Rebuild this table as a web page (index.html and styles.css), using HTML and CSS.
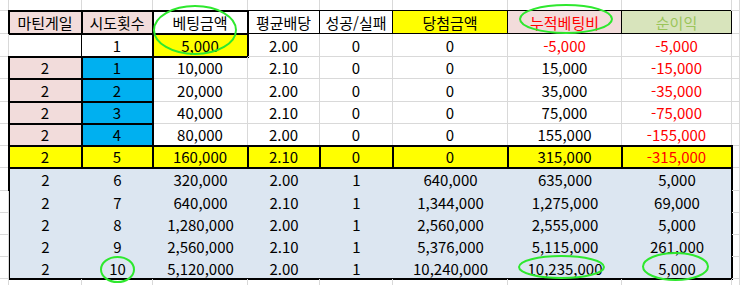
FILE: index.html
```html
<!DOCTYPE html>
<html lang="ko">
<head>
<meta charset="utf-8">
<title>마틴게일</title>
<link rel="stylesheet" href="styles.css">
</head>
<body>
<div class="sheet">
  <div class="grid">
    <!-- top partial row -->
    <div class="c"></div><div class="c"></div><div class="c"></div><div class="c"></div><div class="c"></div><div class="c"></div><div class="c"></div><div class="c"></div><div class="c"></div><div class="c"></div>
    <!-- header -->
    <div class="c"></div>
    <div class="c pink thick">마틴게일</div>
    <div class="c pink thick">시도횟수</div>
    <div class="c thick">베팅금액</div>
    <div class="c thin">평균배당</div>
    <div class="c thin">성공/실패</div>
    <div class="c yellow thin">당첨금액</div>
    <div class="c pink thin red">누적베팅비</div>
    <div class="c green thin gtext">순이익</div>
    <div class="c"></div>
    <!-- row 1 -->
    <div class="c"></div>
    <div class="c"></div>
    <div class="c darkleft">1</div>
    <div class="c yellow thick">5,000</div>
    <div class="c">2.00</div>
    <div class="c">0</div>
    <div class="c">0</div>
    <div class="c red">-5,000</div>
    <div class="c red">-5,000</div>
    <div class="c"></div>
    <!-- row 2 -->
    <div class="c"></div>
    <div class="c pink thick">2</div>
    <div class="c blue thick">1</div>
    <div class="c">10,000</div>
    <div class="c">2.10</div>
    <div class="c">0</div>
    <div class="c">0</div>
    <div class="c">15,000</div>
    <div class="c red">-15,000</div>
    <div class="c"></div>
    <!-- row 3 -->
    <div class="c"></div>
    <div class="c pink thick">2</div>
    <div class="c blue thick">2</div>
    <div class="c">20,000</div>
    <div class="c">2.00</div>
    <div class="c">0</div>
    <div class="c">0</div>
    <div class="c">35,000</div>
    <div class="c red">-35,000</div>
    <div class="c"></div>
    <!-- row 4 -->
    <div class="c"></div>
    <div class="c pink thick">2</div>
    <div class="c blue thick">3</div>
    <div class="c">40,000</div>
    <div class="c">2.10</div>
    <div class="c">0</div>
    <div class="c">0</div>
    <div class="c">75,000</div>
    <div class="c red">-75,000</div>
    <div class="c"></div>
    <!-- row 5 -->
    <div class="c"></div>
    <div class="c pink thick">2</div>
    <div class="c blue thick">4</div>
    <div class="c">80,000</div>
    <div class="c">2.00</div>
    <div class="c">0</div>
    <div class="c">0</div>
    <div class="c">155,000</div>
    <div class="c red">-155,000</div>
    <div class="c"></div>
    <!-- row 6 -->
    <div class="c"></div>
    <div class="c yellow thick">2</div>
    <div class="c yellow thick">5</div>
    <div class="c yellow thick">160,000</div>
    <div class="c yellow thick">2.10</div>
    <div class="c yellow thick">0</div>
    <div class="c yellow thick">0</div>
    <div class="c yellow thick">315,000</div>
    <div class="c yellow thick red">-315,000</div>
    <div class="c"></div>
    <!-- blue block rows 7-11 -->
    <div class="c"></div>
    <div class="block">
      <div class="b">2</div><div class="b">6</div><div class="b">320,000</div><div class="b">2.00</div><div class="b">1</div><div class="b">640,000</div><div class="b">635,000</div><div class="b">5,000</div>
      <div class="b">2</div><div class="b">7</div><div class="b">640,000</div><div class="b">2.10</div><div class="b">1</div><div class="b">1,344,000</div><div class="b">1,275,000</div><div class="b">69,000</div>
      <div class="b">2</div><div class="b">8</div><div class="b">1,280,000</div><div class="b">2.00</div><div class="b">1</div><div class="b">2,560,000</div><div class="b">2,555,000</div><div class="b">5,000</div>
      <div class="b">2</div><div class="b">9</div><div class="b">2,560,000</div><div class="b">2.10</div><div class="b">1</div><div class="b">5,376,000</div><div class="b">5,115,000</div><div class="b">261,000</div>
      <div class="b">2</div><div class="b">10</div><div class="b">5,120,000</div><div class="b">2.00</div><div class="b">1</div><div class="b">10,240,000</div><div class="b">10,235,000</div><div class="b">5,000</div>
    </div>
    <div class="c"></div>
    <div class="c"></div><div class="c"></div>
    <div class="c"></div><div class="c"></div>
    <div class="c"></div><div class="c"></div>
    <div class="c"></div><div class="c"></div>
    <!-- bottom partial row -->
    <div class="c"></div><div class="c"></div><div class="c"></div><div class="c"></div><div class="c"></div><div class="c"></div><div class="c"></div><div class="c"></div><div class="c"></div><div class="c"></div>
  </div>
  <svg class="marks" width="740" height="285" viewBox="0 0 740 285" aria-hidden="true">
    <ellipse cx="195" cy="30" rx="41" ry="24"/>
    <ellipse cx="566" cy="19" rx="46" ry="14"/>
    <ellipse cx="117.5" cy="269.5" rx="16.5" ry="12.5"/>
    <ellipse cx="561.5" cy="267" rx="42.5" ry="11"/>
    <ellipse cx="675.5" cy="266.5" rx="32.5" ry="13.5"/>
  </svg>
</div>
</body>
</html>
```

FILE: styles.css
```css
* { box-sizing: border-box; }

html, body {
  margin: 0;
  padding: 0;
  background: #fff;
  overflow: hidden;
}

.sheet {
  position: relative;
  width: 740px;
  height: 285px;
  overflow: hidden;
  font-family: "Noto Sans CJK KR", "Noto Sans", sans-serif;
  font-size: 15px;
  line-height: 1;
  color: #000;
}

.grid {
  display: grid;
  grid-template-columns: 9px 73px 71px 95px 72px 73px 115px 114px 110px 8px;
  grid-template-rows: 11px 23px 23px 22px 23px 22px 22px 22px 23px 22px 22px 22px 22px 8px;
}

.c {
  border-right: 1px solid #d9d9d9;
  border-bottom: 1px solid #d9d9d9;
  display: flex;
  align-items: center;
  justify-content: center;
  white-space: nowrap;
}

.pink { background: #f2dcdb; }
.blue { background: #00b0f0; }
.yellow { background: #ffff00; }
.green { background: #d8e4bc; }

.red { color: #ff0000; }
.gtext { color: #9bc45a; }

.thick {
  outline: 2px solid #000;
  outline-offset: -1px;
}

.thin {
  border-right-color: #000;
  border-bottom-color: #000;
  box-shadow: -1px -1px 0 #000;
}

.darkleft {
  box-shadow: -1px 0 0 #000;
}

.block {
  grid-column: 2 / span 8;
  grid-row: span 5;
  background: #dce6f1;
  outline: 2px solid #000;
  outline-offset: -1px;
  display: grid;
  grid-template-columns: 73px 71px 95px 72px 73px 115px 114px 110px;
  grid-template-rows: 23px 22px 22px 22px 22px;
}

.b {
  display: flex;
  align-items: center;
  justify-content: center;
  white-space: nowrap;
}

.marks {
  position: absolute;
  left: 0;
  top: 0;
  pointer-events: none;
}

.marks ellipse {
  fill: none;
  stroke: #2ee82e;
  stroke-width: 2;
}
```
